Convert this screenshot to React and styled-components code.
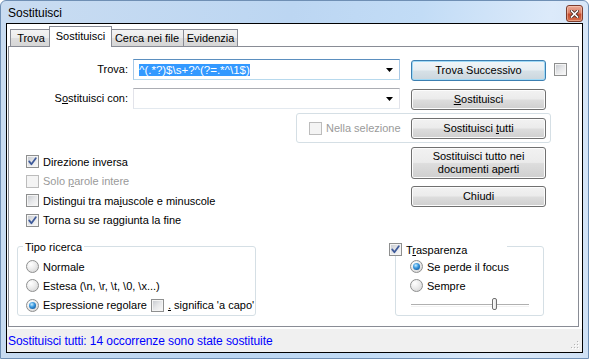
import React from 'react'
import styled, { createGlobalStyle, css } from 'styled-components'

const GlobalStyle = createGlobalStyle`
  html, body {
    margin: 0;
    padding: 0;
    width: 589px;
    height: 359px;
    overflow: hidden;
  }
  body {
    font-family: "Liberation Sans", Arial, sans-serif;
    font-size: 11px;
    color: #000;
  }
  u { text-decoration: underline; text-underline-offset: 1px; }
`

const Window = styled.div`
  width: 589px;
  height: 359px;
  box-sizing: border-box;
  border: 1px solid #6f8fb4;
  border-radius: 6px 6px 0 0;
  background: linear-gradient(100deg, #c9dcf1 0%, #bcd6f2 45%, #c2dcf6 65%, #dceafa 85%, #cfe1f5 100%);
  display: flex;
  flex-direction: column;
`

const TitleBar = styled.div`
  height: 22px;
  flex: none;
  display: flex;
  align-items: center;
  padding: 0 5px 0 7px;
  font-size: 12px;
`

const Title = styled.span`
  flex: 1;
  margin-top: 1px;
`

const CloseButton = styled.div`
  width: 17px;
  height: 17px;
  box-sizing: border-box;
  align-self: flex-start;
  margin-top: 4px;
  border: 1px solid #7b3b2c;
  border-radius: 3px;
  background: linear-gradient(#eaa996 0%, #dc8066 45%, #c44a2d 55%, #d7714d 100%);
  box-shadow: inset 0 0 0 1px rgba(255, 220, 200, 0.45);
  display: flex;
  align-items: center;
  justify-content: center;
`

const Client = styled.div`
  flex: 1;
  margin: 0 5px 5px 5px;
  border: 1px solid #000;
  background: #fff;
  display: flex;
  flex-direction: column;
`

const TabArea = styled.div`
  padding: 2px 3px 0 1px;
  display: flex;
  flex-direction: column;
`

const TabStrip = styled.div`
  height: 20px;
  display: flex;
  align-items: flex-end;
  padding-left: 2px;
`

const Tab = styled.div`
  width: ${({ $w }) => $w}px;
  height: 17px;
  box-sizing: border-box;
  border: 1px solid #898c95;
  border-bottom: none;
  margin-right: -1px;
  background: linear-gradient(#f3f3f3 0%, #ebebeb 50%, #dedede 50%, #d6d6d6 100%);
  display: flex;
  align-items: center;
  justify-content: center;
  white-space: nowrap;
  ${({ $active }) => $active && css`
    height: 21px;
    margin: 0 -2px -1px -2px;
    background: #fff;
    position: relative;
    z-index: 1;
    align-items: flex-start;
    padding-top: 3px;
  `}
`

const Pane = styled.div`
  height: 281px;
  box-sizing: border-box;
  border: 1px solid #898c95;
  background: #fff;
  padding-top: 12px;
  display: flex;
  flex-direction: column;
`

const FieldRow = styled.div`
  height: 22px;
  display: flex;
  align-items: flex-start;
  margin-bottom: ${({ $mb }) => $mb}px;
`

const FieldLabel = styled.div`
  width: 119px;
  margin-right: 5px;
  height: 21px;
  line-height: 21px;
  text-align: right;
`

const Combo = styled.div`
  width: 267px;
  height: 21px;
  box-sizing: border-box;
  border: 1px solid;
  border-color: ${({ $focus }) => ($focus ? '#5b8fbf #a9c9e6 #b7d9ed #a9c9e6' : '#abadb3 #e2e3ea #e3e9ef #e2e3ea')};
  display: flex;
  align-items: center;
  padding-left: 5px;
  font-size: 11.5px;
`

const ComboText = styled.div`
  flex: 1;
  overflow: hidden;
  white-space: nowrap;
`

const Selected = styled.span`
  background: #3399ff;
  color: #fff;
  padding: 1px 0 1px;
`

const ComboArrow = styled.div`
  width: 17px;
  height: 100%;
  display: flex;
  align-items: center;
  justify-content: center;
  padding-right: 1px;
`

const Button = styled.div`
  width: 135px;
  height: ${({ $h }) => $h || 21}px;
  box-sizing: border-box;
  margin-left: ${({ $ml }) => ($ml === undefined ? 0 : $ml)};
  margin-top: ${({ $mt }) => $mt || 0}px;
  border: 1px solid #707070;
  border-radius: 3px;
  background: linear-gradient(#f2f2f2 0%, #ebebeb 48%, #dddddd 52%, #cfcfcf 100%);
  box-shadow: inset 0 0 0 1px #fcfcfc;
  display: flex;
  align-items: center;
  justify-content: center;
  text-align: center;
  line-height: 13px;
  flex: none;
  ${({ $default }) => $default && css`
    border-color: #3c7fb1;
    box-shadow: inset 0 0 0 1px #9fd9f6;
    background: linear-gradient(#f1f6f9 0%, #e7eef2 48%, #d7e1e7 52%, #cbd6dd 100%);
  `}
`

const CheckBox = styled.span`
  width: 13px;
  height: 13px;
  box-sizing: border-box;
  flex: none;
  border: 1px solid ${({ $disabled }) => ($disabled ? '#bcbcbc' : '#8e8f8f')};
  padding: 1px;
  background: #f4f4f4;
  display: inline-flex;
  position: relative;
  margin-left: ${({ $ml }) => $ml || 0}px;
  &::before {
    content: '';
    flex: 1;
    background: ${({ $disabled }) => ($disabled
      ? '#f4f4f4'
      : 'linear-gradient(135deg, #c9ccd1 0%, #e6e7e9 50%, #f7f7f7 100%)')};
  }
  svg {
    position: absolute;
    left: -1px;
    top: -1px;
  }
`

const Radio = styled.span`
  width: 13px;
  height: 13px;
  box-sizing: border-box;
  flex: none;
  border-radius: 50%;
  border: 1px solid #8e8f8f;
  background: radial-gradient(circle at 35% 30%, #ffffff 0%, #ececec 45%, #cfcfcf 100%);
  display: inline-flex;
  align-items: center;
  justify-content: center;
  &::after {
    content: '';
    width: 7px;
    height: 7px;
    border-radius: 50%;
    display: ${({ $checked }) => ($checked ? 'block' : 'none')};
    background: radial-gradient(circle at 40% 35%, #c8ecff 0%, #3d9be0 40%, #145da3 80%, #0d477f 100%);
  }
`

const OptionRow = styled.div`
  height: 19.5px;
  display: flex;
  align-items: center;
  gap: 4px;
  white-space: nowrap;
  color: ${({ $disabled }) => ($disabled ? '#9a9a9a' : '#000')};
`

const SelectionGroup = styled.div`
  margin-left: 287px;
  width: 255px;
  height: 30px;
  box-sizing: border-box;
  border: 1px solid #d5dfe5;
  border-radius: 3px;
  display: flex;
  align-items: center;
  padding: 0 4px 0 12px;
`

const Middle = styled.div`
  height: 103px;
  display: flex;
  align-items: flex-start;
`

const OptionsColumn = styled.div`
  margin-left: 17px;
  padding-top: 9px;
  display: flex;
  flex-direction: column;
`

const ButtonsColumn = styled.div`
  margin-left: auto;
  margin-right: 32px;
  padding-top: 4px;
  display: flex;
  flex-direction: column;
  gap: 7px;
`

const Bottom = styled.div`
  display: flex;
  align-items: flex-start;
`

const GroupBox = styled.div`
  position: relative;
  width: ${({ $w }) => $w}px;
  height: 70px;
  box-sizing: border-box;
  margin-left: ${({ $ml }) => $ml}px;
  border: 1px solid #d5dfe5;
  border-radius: 3px;
  padding: 10px 0 0 ${({ $pl }) => $pl}px;
  display: flex;
  flex-direction: column;
`

const Legend = styled.div`
  position: absolute;
  top: ${({ $top }) => $top}px;
  left: ${({ $left }) => $left}px;
  width: ${({ $w }) => ($w ? `${$w}px` : 'auto')};
  background: #fff;
  padding: 0 2px;
  display: flex;
  align-items: center;
  gap: 4px;
  height: 13px;
  white-space: nowrap;
`

const Slider = styled.div`
  position: relative;
  width: 118px;
  height: 19.5px;
  margin-left: 1px;
  display: flex;
  align-items: center;
  &::before {
    content: '';
    flex: 1;
    height: 1px;
    border-top: 1px solid #b0b0b0;
    border-bottom: 1px solid #f2f2f2;
  }
`

const SliderThumb = styled.span`
  position: absolute;
  left: ${({ $pos }) => $pos}px;
  top: 2px;
  width: 5px;
  height: 12px;
  box-sizing: border-box;
  border: 1px solid #707070;
  border-radius: 2px;
  background: linear-gradient(90deg, #ffffff, #e4e4e4);
`

const StatusBar = styled.div`
  margin-top: 2px;
  flex: 1;
  background: #f0f0f0;
  display: flex;
  align-items: center;
  padding-left: 1px;
  position: relative;
`

const StatusText = styled.span`
  font-size: 12px;
  letter-spacing: -0.08px;
  color: #0000ff;
  white-space: nowrap;
`

const Grip = styled.svg`
  position: absolute;
  right: 2px;
  bottom: 2px;
`

const Check = ({ checked, disabled, ml }) => (
  <CheckBox $disabled={disabled} $ml={ml}>
    {checked && (
      <svg width="13" height="13" viewBox="0 0 13 13">
        <path d="M3.2 6.4 L5.4 9.2 L9.8 3.2" fill="none" stroke="#3e5a9a" strokeWidth="1.8" strokeLinecap="round" strokeLinejoin="round" />
      </svg>
    )}
  </CheckBox>
)

const DropArrow = () => (
  <ComboArrow>
    <svg width="7" height="4" viewBox="0 0 7 4">
      <path d="M0 0 H7 L3.5 4 Z" fill="#000" />
    </svg>
  </ComboArrow>
)

export default function App() {
  return (
    <>
      <GlobalStyle />
      <Window>
        <TitleBar>
          <Title>Sostituisci</Title>
          <CloseButton>
            <svg width="9" height="8" viewBox="0 0 9 8">
              <path d="M1.5 1 L7.5 7 M7.5 1 L1.5 7" stroke="#4a2a22" strokeWidth="3.2" strokeLinecap="square" />
              <path d="M1.5 1 L7.5 7 M7.5 1 L1.5 7" stroke="#fff" strokeWidth="1.6" strokeLinecap="square" />
            </svg>
          </CloseButton>
        </TitleBar>
        <Client>
          <TabArea>
            <TabStrip>
              <Tab $w={42}>Trova</Tab>
              <Tab $w={63} $active>Sostituisci</Tab>
              <Tab $w={74}>Cerca nei file</Tab>
              <Tab $w={55}>Evidenzia</Tab>
            </TabStrip>
            <Pane>
              <FieldRow $mb={7}>
                <FieldLabel>Trova:</FieldLabel>
                <Combo $focus>
                  <ComboText><Selected>^(.*?)$\s+?^(?=.*^\1$)</Selected></ComboText>
                  <DropArrow />
                </Combo>
                <Button $default $ml="11px" $mt={1}>Trova Successivo</Button>
                <CheckBox $ml={8} style={{ marginTop: 4 }} />
              </FieldRow>
              <FieldRow $mb={3}>
                <FieldLabel>S<u>o</u>stituisci con:</FieldLabel>
                <Combo>
                  <ComboText />
                  <DropArrow />
                </Combo>
                <Button $ml="11px" $mt={1}><span><u>S</u>ostituisci</span></Button>
              </FieldRow>
              <SelectionGroup>
                <OptionRow $disabled>
                  <Check disabled />
                  <span>Nella selezione</span>
                </OptionRow>
                <Button $ml="auto">
                  <span>Sostituisci <u>t</u>utti</span>
                </Button>
              </SelectionGroup>
              <Middle>
                <OptionsColumn>
                  <OptionRow>
                    <Check checked />
                    <span>Direzione inversa</span>
                  </OptionRow>
                  <OptionRow $disabled>
                    <Check disabled />
                    <span>Solo <u>p</u>arole intere</span>
                  </OptionRow>
                  <OptionRow>
                    <Check />
                    <span>Distingui tra ma<u>i</u>uscole e minuscole</span>
                  </OptionRow>
                  <OptionRow>
                    <Check checked />
                    <span>Torna su se raggiunta la fine</span>
                  </OptionRow>
                </OptionsColumn>
                <ButtonsColumn>
                  <Button $h={32}>Sostituisci tutto nei<br />documenti aperti</Button>
                  <Button>Chiudi</Button>
                </ButtonsColumn>
              </Middle>
              <Bottom>
                <GroupBox $w={239} $ml={8} $pl={8}>
                  <Legend $top={-7} $left={5}>Tipo ricerca</Legend>
                  <OptionRow>
                    <Radio />
                    <span>Normale</span>
                  </OptionRow>
                  <OptionRow>
                    <Radio />
                    <span>Estesa (\n, \r, \t, \0, \x...)</span>
                  </OptionRow>
                  <OptionRow>
                    <Radio $checked />
                    <span>Espressione regolare</span>
                    <Check ml={0} />
                    <span><u>.</u> significa 'a capo'</span>
                  </OptionRow>
                </GroupBox>
                <GroupBox $w={149} $ml={139} $pl={14}>
                  <Legend $top={-4} $left={-9} $w={116}>
                    <Check checked />
                    <span>T<u>r</u>asparenza</span>
                  </Legend>
                  <OptionRow>
                    <Radio $checked />
                    <span>Se perde il focus</span>
                  </OptionRow>
                  <OptionRow>
                    <Radio />
                    <span>Sempre</span>
                  </OptionRow>
                  <Slider>
                    <SliderThumb $pos={81} />
                  </Slider>
                </GroupBox>
              </Bottom>
            </Pane>
          </TabArea>
          <StatusBar>
            <StatusText>Sostituisci tutti: 14 occorrenze sono state sostituite</StatusText>
            <Grip width="10" height="10" viewBox="0 0 10 10">
              {[[8, 2], [8, 5], [5, 5], [8, 8], [5, 8], [2, 8]].map(([x, y], i) => (
                <g key={i}>
                  <rect x={x} y={y} width="1" height="1" fill="#fff" />
                  <rect x={x - 1} y={y - 1} width="1" height="1" fill="#b4b4b4" />
                </g>
              ))}
            </Grip>
          </StatusBar>
        </Client>
      </Window>
    </>
  )
}
